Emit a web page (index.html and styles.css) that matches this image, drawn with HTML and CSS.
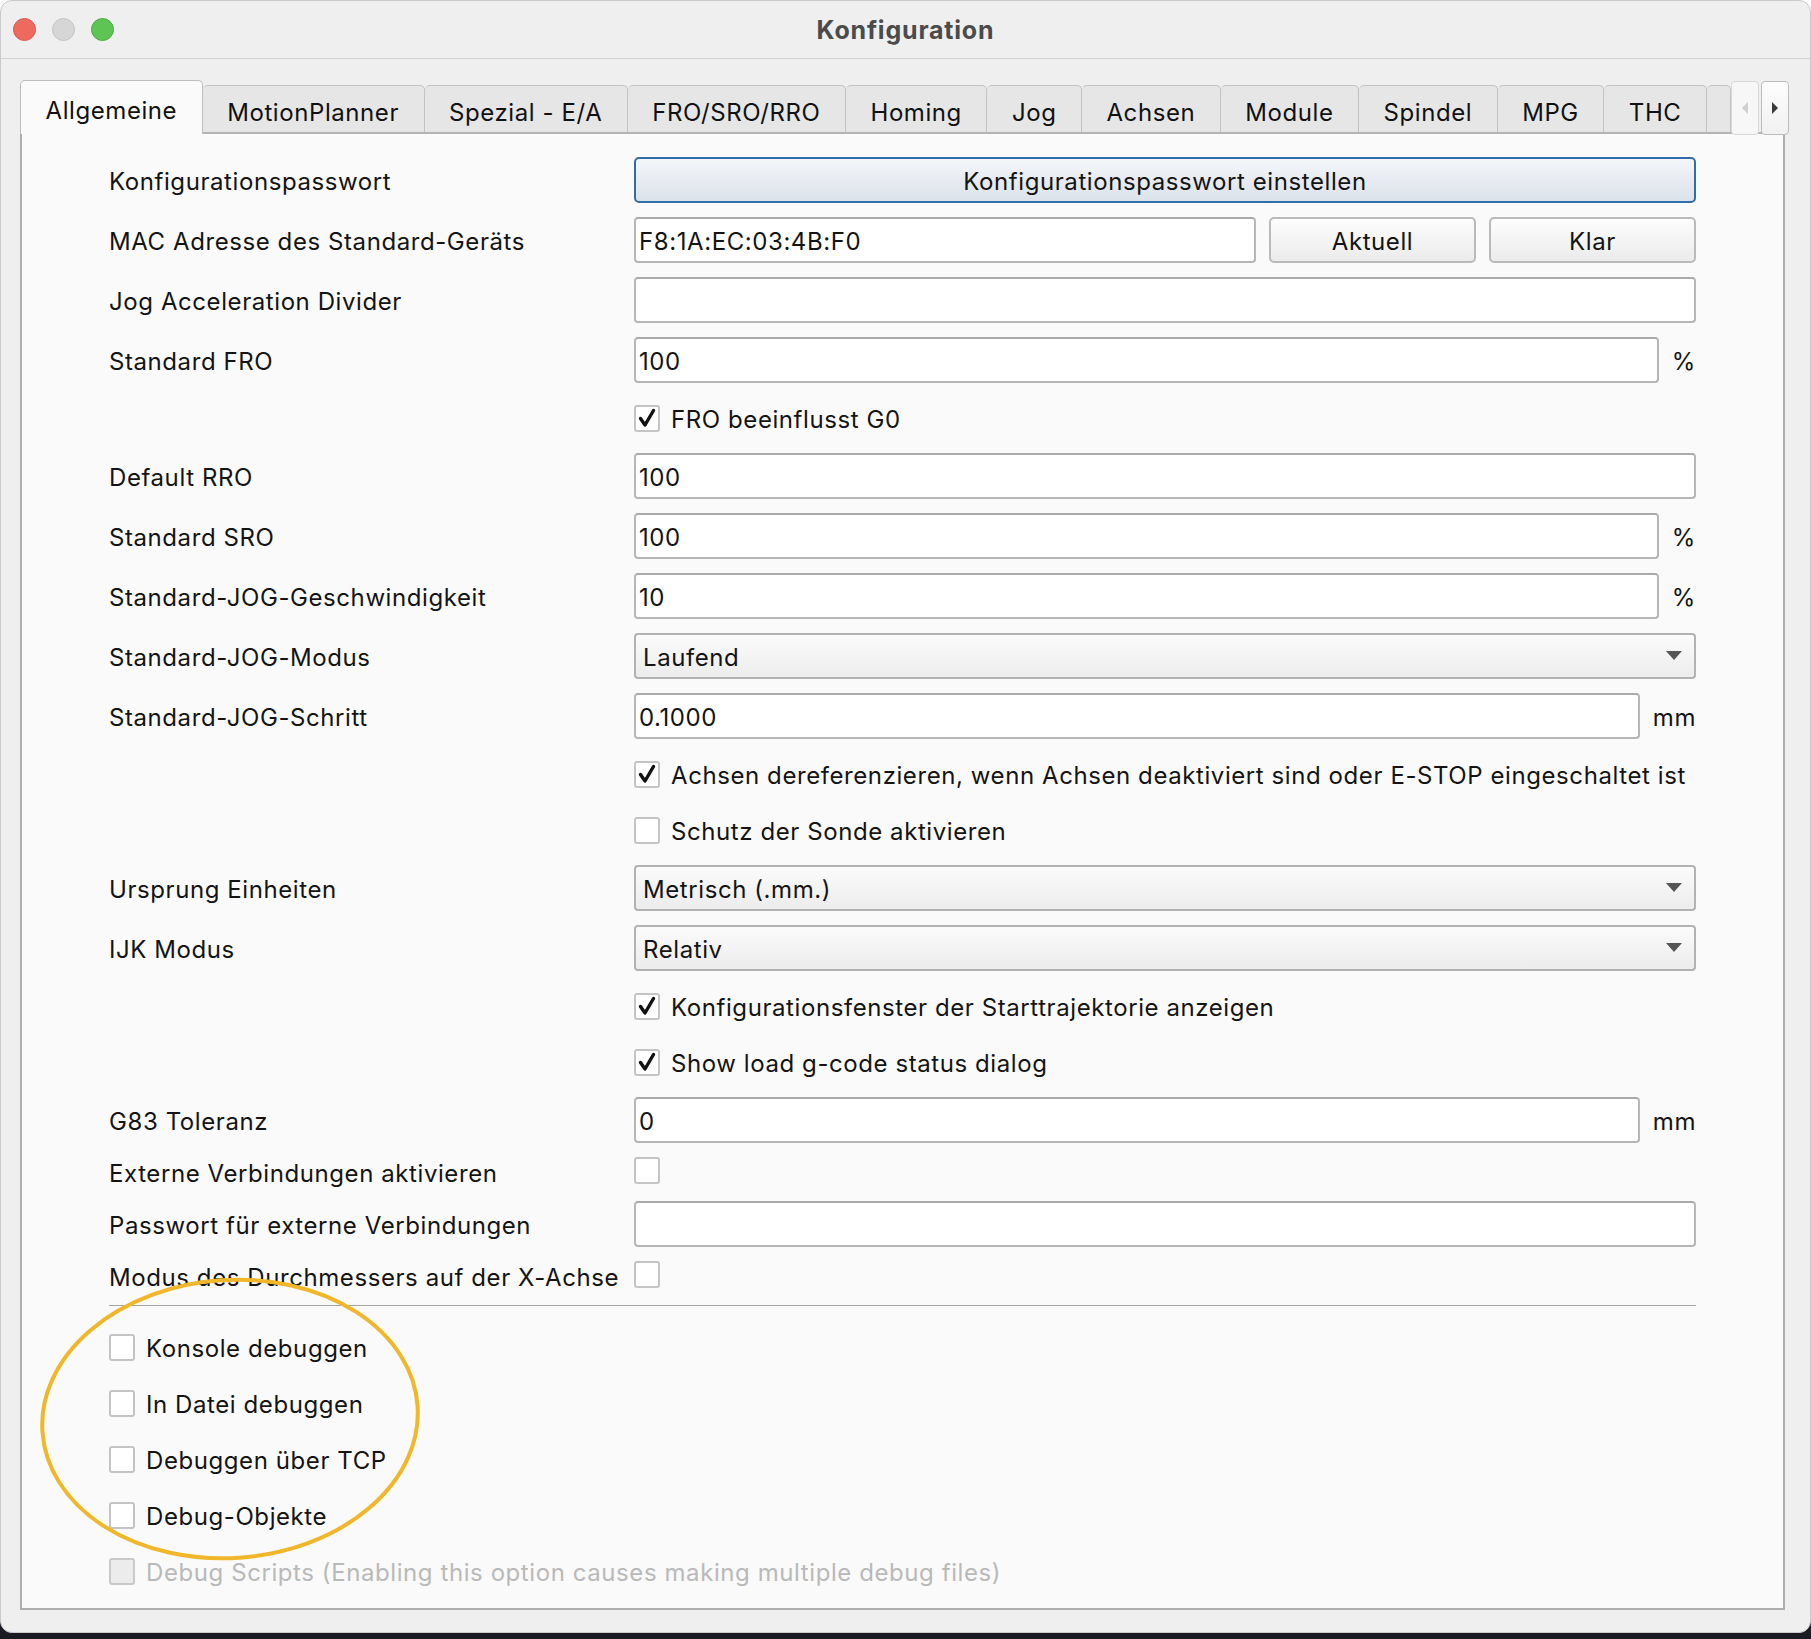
FILE: index.html
```html
<!DOCTYPE html>
<html lang="de">
<head>
<meta charset="utf-8">
<title>Konfiguration</title>
<link rel="stylesheet" href="styles.css">
</head>
<body>
<div class="window">
  <div class="titlebar">
    <div class="lights">
      <span class="light red"></span>
      <span class="light gray"></span>
      <span class="light green"></span>
    </div>
    <div class="title">Konfiguration</div>
  </div>
  <div class="content">
    <div class="tabbar">
      <div class="tab active">Allgemeine</div>
      <div class="tab">MotionPlanner</div>
      <div class="tab">Spezial - E/A</div>
      <div class="tab">FRO/SRO/RRO</div>
      <div class="tab">Homing</div>
      <div class="tab">Jog</div>
      <div class="tab">Achsen</div>
      <div class="tab">Module</div>
      <div class="tab">Spindel</div>
      <div class="tab">MPG</div>
      <div class="tab">THC</div>
      <div class="tab partial"></div>
      <div class="scroller">
        <div class="scroll-btn disabled"><svg width="10" height="14" viewBox="0 0 10 14"><path d="M8 1 L2 7 L8 13 Z" fill="#d0d0d0"/></svg></div>
        <div class="scroll-btn"><svg width="10" height="14" viewBox="0 0 10 14"><path d="M2 1 L8 7 L2 13 Z" fill="#3a3a3a"/></svg></div>
      </div>
    </div>
    <div class="panel">
      <div class="form">
        <div class="label">Konfigurationspasswort</div>
        <div class="field"><div class="btn default">Konfigurationspasswort einstellen</div></div>

        <div class="label">MAC Adresse des Standard-Geräts</div>
        <div class="field">
          <div class="input">F8:1A:EC:03:4B:F0</div>
          <div class="btn small">Aktuell</div>
          <div class="btn small">Klar</div>
        </div>

        <div class="label">Jog Acceleration Divider</div>
        <div class="field"><div class="input"></div></div>

        <div class="label">Standard FRO</div>
        <div class="field"><div class="input">100</div><div class="unit">%</div></div>

        <div class="check-row col2"><span class="box checked"><svg width="22" height="22" viewBox="0 0 22 22"><path d="M4.5 11.5 L9 18 L17.5 3.5" fill="none" stroke="#111" stroke-width="3.4" stroke-linecap="round" stroke-linejoin="round"/></svg></span><span>FRO beeinflusst G0</span></div>

        <div class="label">Default RRO</div>
        <div class="field"><div class="input">100</div></div>

        <div class="label">Standard SRO</div>
        <div class="field"><div class="input">100</div><div class="unit">%</div></div>

        <div class="label">Standard-JOG-Geschwindigkeit</div>
        <div class="field"><div class="input">10</div><div class="unit">%</div></div>

        <div class="label">Standard-JOG-Modus</div>
        <div class="field"><div class="combo">Laufend<span class="caret"></span></div></div>

        <div class="label">Standard-JOG-Schritt</div>
        <div class="field"><div class="input">0.1000</div><div class="unit">mm</div></div>

        <div class="check-row col2"><span class="box checked"><svg width="22" height="22" viewBox="0 0 22 22"><path d="M4.5 11.5 L9 18 L17.5 3.5" fill="none" stroke="#111" stroke-width="3.4" stroke-linecap="round" stroke-linejoin="round"/></svg></span><span>Achsen dereferenzieren, wenn Achsen deaktiviert sind oder E-STOP eingeschaltet ist</span></div>

        <div class="check-row col2"><span class="box"></span><span>Schutz der Sonde aktivieren</span></div>

        <div class="label">Ursprung Einheiten</div>
        <div class="field"><div class="combo">Metrisch (.mm.)<span class="caret"></span></div></div>

        <div class="label">IJK Modus</div>
        <div class="field"><div class="combo">Relativ<span class="caret"></span></div></div>

        <div class="check-row col2"><span class="box checked"><svg width="22" height="22" viewBox="0 0 22 22"><path d="M4.5 11.5 L9 18 L17.5 3.5" fill="none" stroke="#111" stroke-width="3.4" stroke-linecap="round" stroke-linejoin="round"/></svg></span><span>Konfigurationsfenster der Starttrajektorie anzeigen</span></div>

        <div class="check-row col2"><span class="box checked"><svg width="22" height="22" viewBox="0 0 22 22"><path d="M4.5 11.5 L9 18 L17.5 3.5" fill="none" stroke="#111" stroke-width="3.4" stroke-linecap="round" stroke-linejoin="round"/></svg></span><span>Show load g-code status dialog</span></div>

        <div class="label">G83 Toleranz</div>
        <div class="field"><div class="input">0</div><div class="unit">mm</div></div>

        <div class="label">Externe Verbindungen aktivieren</div>
        <div class="field top"><span class="box"></span></div>

        <div class="label">Passwort für externe Verbindungen</div>
        <div class="field"><div class="input"></div></div>

        <div class="label">Modus des Durchmessers auf der X-Achse</div>
        <div class="field top"><span class="box"></span></div>

        <div class="separator"></div>

        <div class="check-row full"><span class="box"></span><span>Konsole debuggen</span></div>
        <div class="check-row full"><span class="box"></span><span>In Datei debuggen</span></div>
        <div class="check-row full"><span class="box"></span><span>Debuggen über TCP</span></div>
        <div class="check-row full"><span class="box"></span><span>Debug-Objekte</span></div>
        <div class="check-row full disabled"><span class="box"></span><span>Debug Scripts (Enabling this option causes making multiple debug files)</span></div>
      </div>
      <svg class="highlight" width="384" height="286" viewBox="0 0 384 286"><ellipse cx="192" cy="143" rx="188" ry="139" fill="none" stroke="#f1b72a" stroke-width="4" transform="rotate(-4 192 143)"/></svg>
    </div>
  </div>
</div>
</body>
</html>
```

FILE: styles.css
```css
html, body {
  margin: 0;
  padding: 0;
}

body {
  width: 1811px;
  height: 1639px;
  background: linear-gradient(#ffffff 0, #ffffff 50%, #1c1b24 50%, #1c1b24 100%);
  font-family: Inter, "Noto Sans", "Liberation Sans", sans-serif;
  font-size: 24px;
  letter-spacing: 0.58px;
  color: #141414;
}

.window {
  width: 1811px;
  height: 1633px;
  background: #efefef;
  border-radius: 12px;
  box-sizing: border-box;
  border: 1px solid #c9c9c9;
  display: flex;
  flex-direction: column;
  overflow: hidden;
}

.titlebar {
  height: 57px;
  flex: none;
  border-bottom: 1px solid #d2d2d2;
  display: flex;
  align-items: center;
  position: relative;
}

.lights {
  display: flex;
  gap: 16px;
  padding-left: 12px;
  position: relative;
  z-index: 1;
}

.light {
  width: 23px;
  height: 23px;
  border-radius: 50%;
  display: block;
  box-sizing: border-box;
}

.light.red { background: #ee6a5f; border: 1px solid #d9574d; }
.light.gray { background: #d6d6d6; border: 1px solid #c4c4c4; }
.light.green { background: #5ec454; border: 1px solid #4aab41; }

.title {
  position: absolute;
  left: 0;
  right: 0;
  text-align: center;
  font-weight: 700;
  font-size: 25px;
  letter-spacing: 0.8px;
  color: #4b4b4b;
}

.content {
  flex: 1;
  display: flex;
  flex-direction: column;
  padding: 21px 25px 22px 19px;
}

.tabbar {
  height: 52px;
  flex: none;
  display: flex;
  align-items: flex-end;
  position: relative;
  z-index: 2;
}

.tab {
  height: 47px;
  box-sizing: border-box;
  padding: 6px 24.5px 0;
  display: flex;
  align-items: center;
  background: #e6e6e6;
  border: 1px solid #c3c3c3;
  border-bottom: none;
  border-left: none;
  border-radius: 5px 5px 0 0;
  white-space: nowrap;
  color: #111;
}

.tab.active {
  height: 54px;
  margin-bottom: -2px;
  padding-top: 5px;
  background: #fafafa;
  border-left: 1px solid #c3c3c3;
  border-color: #bdbdbd;
}

.tab.partial {
  width: 24px;
  padding: 0;
  flex: none;
}

.scroller {
  display: flex;
  gap: 2px;
  align-self: flex-start;
  margin-top: 1px;
  height: 54px;
}

.scroll-btn {
  width: 28px;
  height: 54px;
  box-sizing: border-box;
  border: 1px solid #bcbcbc;
  border-radius: 4px;
  background: linear-gradient(#fdfdfd, #f1f1f1);
  display: flex;
  align-items: center;
  justify-content: center;
}

.scroll-btn.disabled {
  background: #f7f7f7;
  border-color: #d8d8d8;
}

.panel {
  flex: 1;
  position: relative;
  background: #fafafa;
  border: 2px solid #aeaeae;
  border-top-color: #b4b4b4;
}

.form {
  display: grid;
  grid-template-columns: 525px 1fr;
  row-gap: 14px;
  padding: 23px 87px 0 87px;
}

.label {
  line-height: 30px;
  align-self: center;
  white-space: nowrap;
  padding-top: 2px;
  height: 30px;
  box-sizing: border-box;
}

.field {
  display: flex;
  align-items: center;
  gap: 13px;
}

.field.top {
  align-self: start;
}

.input {
  flex: 1;
  height: 46px;
  box-sizing: border-box;
  background: #ffffff;
  border: 2px solid #b6b6b6;
  border-top-color: #a9a9a9;
  border-radius: 4px;
  padding: 2px 0 0 3px;
  display: flex;
  align-items: center;
}

.unit {
  flex: none;
  padding-top: 2px;
}

.btn {
  height: 46px;
  box-sizing: border-box;
  border-radius: 5px;
  display: flex;
  align-items: center;
  justify-content: center;
  padding-top: 2px;
  border: 2px solid #bababa;
  background: linear-gradient(#fdfdfd, #ebebeb);
}

.btn.default {
  flex: 1;
  border-color: #2f6ea8;
  background: linear-gradient(#f4f6f9, #dbe2ea);
}

.btn.small {
  width: 207px;
  flex: none;
}

.combo {
  flex: 1;
  height: 46px;
  box-sizing: border-box;
  border: 2px solid #b2b2b2;
  border-radius: 4px;
  background: linear-gradient(#fbfbfb, #ececec);
  padding: 2px 0 0 7px;
  display: flex;
  align-items: center;
  position: relative;
}

.caret {
  position: absolute;
  right: 12px;
  top: 16px;
  width: 0;
  height: 0;
  border-left: 8px solid transparent;
  border-right: 8px solid transparent;
  border-top: 9px solid #555555;
}

.check-row {
  height: 42px;
  display: flex;
  align-items: center;
  gap: 11px;
  white-space: nowrap;
}

.check-row > span:last-child {
  padding-top: 2px;
}

.col2 {
  grid-column: 2;
}

.full {
  grid-column: 1 / span 2;
}

.box {
  width: 26px;
  height: 27px;
  box-sizing: border-box;
  flex: none;
  background: #ffffff;
  border: 2px solid #c4c4c4;
  border-radius: 3px;
  display: flex;
  align-items: center;
  justify-content: center;
}

.disabled {
  color: #b9b9b9;
}

.disabled .box {
  background: #ececec;
  border-color: #c9c9c9;
}

.separator {
  grid-column: 1 / span 2;
  height: 1px;
  background: #a3a3a3;
  border-bottom: 1px solid #ffffff;
  margin-bottom: 5px;
}

.highlight {
  position: absolute;
  left: 16px;
  top: 1142px;
}
```
